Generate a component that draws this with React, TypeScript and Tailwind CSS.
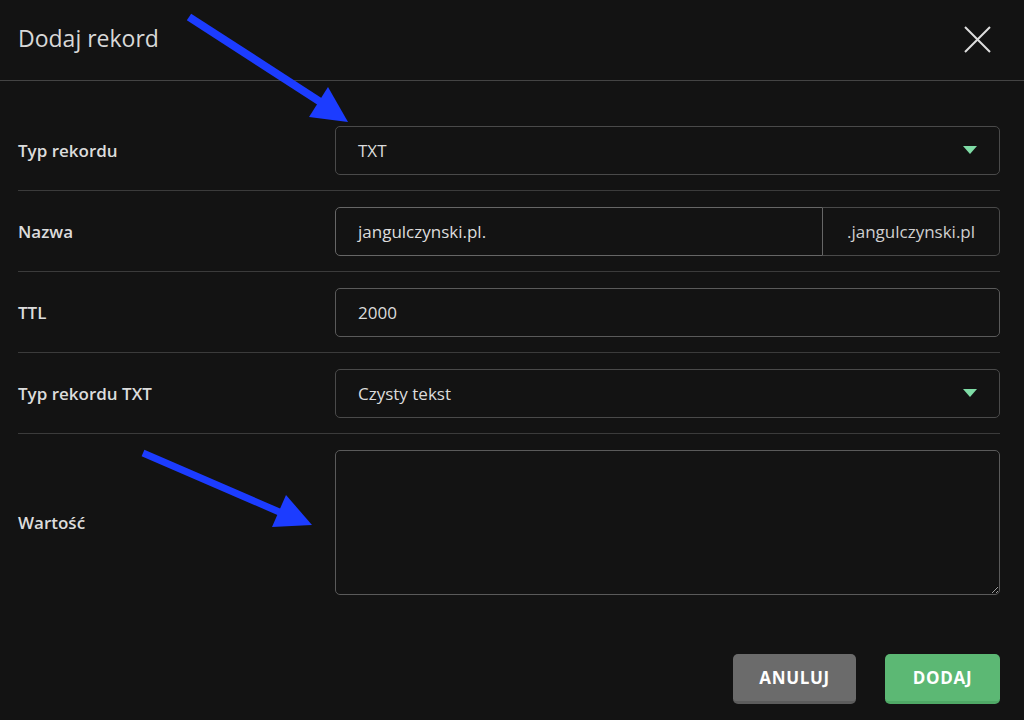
import React from "react";

function Caret() {
  return (
    <svg width="14" height="9" viewBox="0 0 14 9" className="shrink-0">
      <path d="M0 0 H14 L7 8 Z" fill="#7fdca6" />
    </svg>
  );
}

function Row({ label, children, last }: { label: string; children: React.ReactNode; last?: boolean }) {
  return (
    <div className={`flex items-center pt-4 ${last ? "" : "pb-[15px] border-b border-[#3b3b3b]"}`}>
      <div className="w-[317px] shrink-0 text-[17px] font-semibold text-[#dcdcdc]">{label}</div>
      <div className="flex-1">{children}</div>
    </div>
  );
}

export default function App() {
  return (
    <div
      className="relative w-[1024px] h-[720px] overflow-hidden bg-[#131313] text-[#dcdcdc]"
      style={{ fontFamily: '"Open Sans", "Noto Sans", sans-serif' }}
    >
      {/* header */}
      <div className="h-[81px] flex items-center justify-between pl-[18px] pr-[33px] border-b border-[#444]">
        <h1 className="text-[23px] font-normal text-[#d8d8d8] -mt-[3px]">Dodaj rekord</h1>
        <svg width="27" height="27" viewBox="0 0 27 27" className="-mt-[2px]">
          <path d="M1 1 L26 26 M26 1 L1 26" stroke="#dedede" strokeWidth="2" />
        </svg>
      </div>

      {/* form */}
      <div className="pt-[29px] pl-[18px] pr-[24px]">
        <Row label="Typ rekordu">
          <div className="h-[49px] rounded-[5px] border border-[#4a4a4a] flex items-center justify-between pl-[22px] pr-[22px] text-[17px]">
            <span>TXT</span>
            <Caret />
          </div>
        </Row>
        <Row label="Nazwa">
          <div className="h-[49px] flex text-[17px]">
            <div className="flex-1 rounded-l-[5px] border border-[#666] flex items-center pl-[22px]">
              jangulczynski.pl.
            </div>
            <div className="w-[177px] rounded-r-[5px] border border-l-0 border-[#4a4a4a] flex items-center justify-center text-[#cfcfcf]">
              .jangulczynski.pl
            </div>
          </div>
        </Row>
        <Row label="TTL">
          <div className="h-[49px] rounded-[5px] border border-[#5a5a5a] flex items-center pl-[22px] text-[17px]">
            2000
          </div>
        </Row>
        <Row label="Typ rekordu TXT">
          <div className="h-[49px] rounded-[5px] border border-[#4a4a4a] flex items-center justify-between pl-[22px] pr-[22px] text-[17px]">
            <span>Czysty tekst</span>
            <Caret />
          </div>
        </Row>
        <Row label="Wartość" last>
          <textarea
            className="block w-full h-[145px] rounded-[5px] border border-[#5a5a5a] bg-transparent outline-none p-3 text-[17px] [color-scheme:dark]"
            defaultValue=""
          />
        </Row>

        <div className="flex justify-end gap-[29px] mt-[59px]">
          <button className="w-[123px] h-[50px] rounded-[5px] bg-[#6b6b6b] border-b-[3px] border-[#5c5c5c] text-white text-[17px] font-bold tracking-[0.04em]">
            ANULUJ
          </button>
          <button className="w-[115px] h-[50px] rounded-[5px] bg-[#5cb874] border-b-[3px] border-[#4fa866] text-white text-[17px] font-bold tracking-[0.04em]">
            DODAJ
          </button>
        </div>
      </div>

      {/* annotation arrows */}
      <svg className="absolute inset-0 pointer-events-none" width="1024" height="720" viewBox="0 0 1024 720">
        <line x1="189" y1="17" x2="322" y2="103" stroke="#1c3cff" strokeWidth="8" />
        <path d="M348 122 L328 87 L309 117 Z" fill="#1c3cff" />
        <line x1="143" y1="453" x2="284" y2="514" stroke="#1c3cff" strokeWidth="7" />
        <path d="M312 525 L286 495 L272 527 Z" fill="#1c3cff" />
      </svg>
    </div>
  );
}
